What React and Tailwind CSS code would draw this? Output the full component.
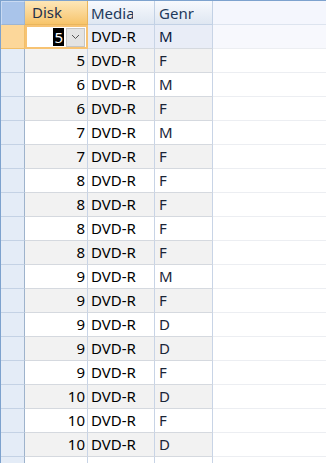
import React from 'react';

const rows = [
  [5, 'M'], [5, 'F'], [6, 'M'], [6, 'F'], [7, 'M'], [7, 'F'],
  [8, 'F'], [8, 'F'], [8, 'F'], [8, 'F'], [9, 'M'], [9, 'F'],
  [9, 'D'], [9, 'D'], [9, 'F'], [10, 'D'], [10, 'F'], [10, 'D'],
];

const font = { fontFamily: '"Noto Sans", "Open Sans", sans-serif' };

const Chevron = () => (
  <svg width="9" height="6" viewBox="0 0 9 6" fill="none">
    <path d="M1 1 L4.5 4.5 L8 1" stroke="#555" strokeWidth="1" />
  </svg>
);

const App = () => {
  return (
    <div className="w-[326px] h-[463px] overflow-hidden bg-white border-t border-l border-[#7da2ce] text-[15px] leading-none" style={font}>
      {/* header */}
      <div className="flex h-[24px]">
        <div className="w-[24px] shrink-0 bg-[#a9c4ea] border-t border-l border-[#c9daf2] border-b border-b-[#9db5d3] border-r border-r-[#9db5d3]" />
        <div className="w-[63px] shrink-0 flex items-center pl-[7px] bg-gradient-to-b from-[#fde7b8] to-[#f7c46a] border-b border-r border-[#e9b65d] text-[#1e2f4b]">
          Disk
        </div>
        <div className="w-[67px] shrink-0 flex items-center pl-[3px] bg-gradient-to-b from-[#f7f9fd] to-[#dfe7f2] border-b border-r border-[#c2d1e5] text-[#1e395b]">
          <span className="block w-[42px] h-[20px] leading-[20px] overflow-hidden whitespace-nowrap">Media</span>
        </div>
        <div className="w-[58px] shrink-0 flex items-center pl-[4px] bg-gradient-to-b from-[#f7f9fd] to-[#dfe7f2] border-b border-r border-[#c2d1e5] text-[#1e395b]">
          <span className="block w-[35px] h-[20px] leading-[20px] overflow-hidden whitespace-nowrap">Genre</span>
        </div>
        <div className="flex-1 bg-[#f4f6fd] border-b border-[#dde4ef]" />
      </div>

      {rows.map(([disk, genre], i) => {
        const selected = i === 0;
        const gray = i % 2 === 1;
        const bg = selected ? 'bg-[#e9edf7]' : gray ? 'bg-[#f2f2f2]' : 'bg-white';
        return (
          <div key={i} className="flex h-[24px]">
            <div className={`w-[24px] shrink-0 border-r border-b ${selected ? 'bg-[#fcd79a] border-r-[#f2bf69] border-b-[#f2bf69]' : 'bg-[#e4ecf7] border-r-[#9eb3cc] border-b-[#c4d2e5]'}`} />
            {selected ? (
              <div className="w-[63px] shrink-0 flex items-center justify-end border-2 border-[#f7c373] bg-white pr-[1px]">
                <span className="bg-black text-white h-[18px] flex items-center px-px">{disk}</span>
                <div className="ml-[2px] w-[19px] h-[19px] bg-[#e3e3e3] border border-[#c5c5c5] flex items-center justify-center">
                  <Chevron />
                </div>
              </div>
            ) : (
              <div className={`w-[63px] shrink-0 flex items-center justify-end pr-[2px] border-r border-r-[#c8d4e6] border-b border-b-[#d5d9df] text-black ${bg}`}>
                {disk}
              </div>
            )}
            <div className={`w-[67px] shrink-0 flex items-center pl-[3px] border-r border-r-[#c8d4e6] border-b border-b-[#d5d9df] text-black ${bg}`}>
              DVD-R
            </div>
            <div className={`w-[58px] shrink-0 flex items-center pl-[4px] border-r border-r-[#c8d4e6] border-b border-b-[#d5d9df] ${selected ? 'text-[#0c1a3d]' : 'text-[#1b2538]'} ${bg}`}>
              {genre}
            </div>
            <div className={`flex-1 border-b border-[#eceef2] ${selected ? 'bg-[#f7f8fd]' : 'bg-white'}`} />
          </div>
        );
      })}

      <div className="flex h-[24px]">
        <div className="w-[24px] shrink-0 bg-[#e4ecf7] border-r border-[#9eb3cc]" />
        <div className="w-[63px] shrink-0 border-r border-[#c8d4e6]" />
        <div className="w-[67px] shrink-0 border-r border-[#c8d4e6]" />
        <div className="w-[58px] shrink-0 border-r border-[#c8d4e6]" />
      </div>
    </div>
  );
};

export default App;
